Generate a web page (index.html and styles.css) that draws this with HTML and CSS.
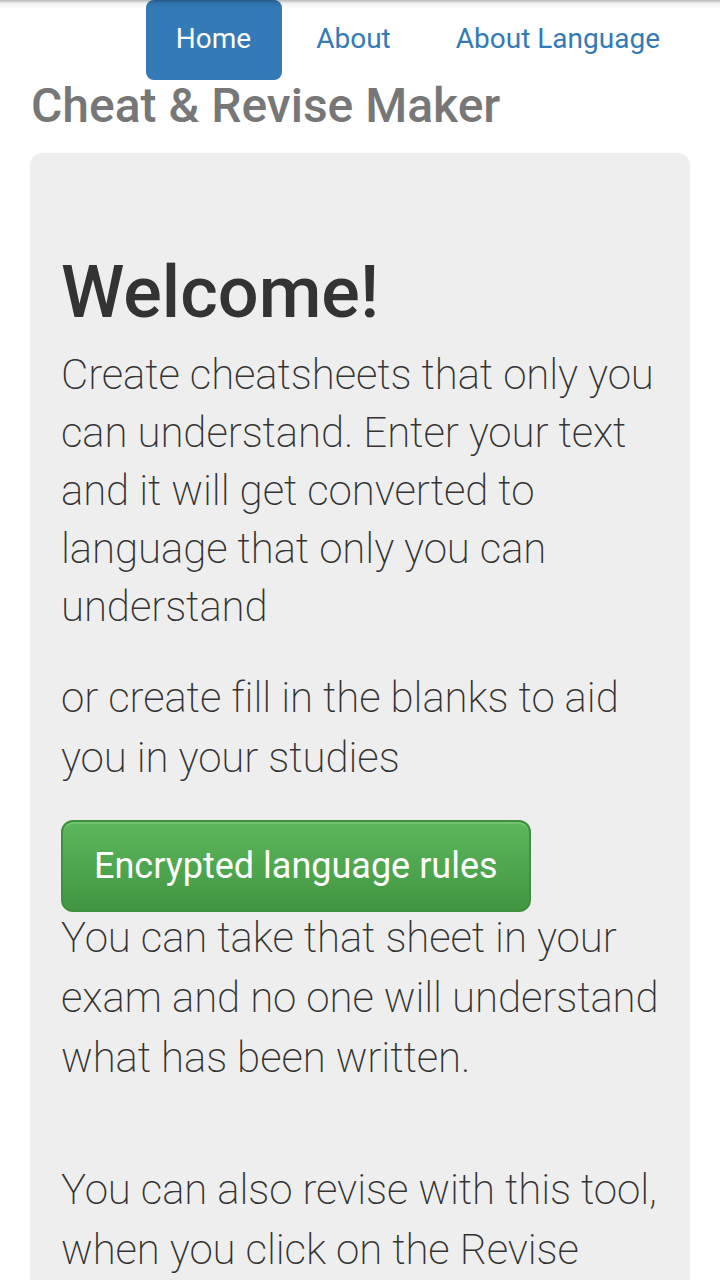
FILE: index.html
```html
<!DOCTYPE html>
<html lang="en">
<head>
<meta charset="utf-8">
<title>Cheat &amp; Revise Maker</title>
<link rel="stylesheet" href="styles.css">
</head>
<body>
<div class="topshade"></div>
<nav class="nav">
  <a class="nav-link active" href="#">Home</a>
  <a class="nav-link" href="#">About</a>
  <a class="nav-link" href="#">About Language</a>
</nav>
<h3 class="site-title">Cheat &amp; Revise Maker</h3>
<div class="jumbotron">
  <h1 class="welcome">Welcome!</h1>
  <p class="lead first">Create cheatsheets that only you can understand. Enter your text and it will get converted to language that only you can understand</p>
  <p class="lead">or create fill in the blanks to aid you in your studies</p>
  <a class="btn-success" href="#">Encrypted language rules</a>
  <p class="lead after-btn">You can take that sheet in your exam and no one will understand what has been written.</p>
  <p class="lead last">You can also revise with this tool, when you click on the Revise button</p>
</div>
</body>
</html>
```
FILE: styles.css
```css
html, body {
  margin: 0;
  padding: 0;
  background: #fff;
}
body {
  font-family: Roboto, "Noto Sans", sans-serif;
  color: #333;
  overflow: hidden;
  height: 1280px;
}
.topshade {
  position: fixed;
  top: 0;
  left: 0;
  right: 0;
  height: 8px;
  background: linear-gradient(to bottom, rgba(0,0,0,0.28), rgba(0,0,0,0.06) 40%, rgba(0,0,0,0));
  z-index: 10;
}
.nav {
  display: flex;
  justify-content: flex-end;
  gap: 4px;
  padding: 0 29px 0 0;
  height: 80px;
}
.nav-link {
  display: block;
  padding: 0 31px 0 30px;
  height: 80px;
  line-height: 78px;
  font-size: 28px;
  color: #337ab7;
  text-decoration: none;
  border-radius: 8px;
}
.nav-link.active {
  background: #337ab7;
  color: #fff;
}
.site-title {
  margin: 0 0 20px 31px;
  font-size: 48px;
  line-height: 1.1;
  font-weight: 500;
  color: #777;
}
.jumbotron {
  margin: 0 30px;
  background: #eee;
  border-radius: 12px;
  padding: 60px 26px 60px 31px;
  min-height: 1200px;
}
.welcome {
  margin: 40px 0 14px;
  font-size: 72px;
  line-height: 1.1;
  font-weight: 500;
  color: #333;
}
.lead {
  margin: 0 0 30px;
  font-size: 42px;
  line-height: 60px;
  font-weight: 200;
  letter-spacing: -0.1px;
  color: #333;
}
.lead.first {
  line-height: 58px;
  margin-bottom: 32px;
}
.btn-success {
  display: inline-block;
  margin-top: 2px;
  padding: 20px 31px;
  font-size: 36px;
  line-height: 48px;
  letter-spacing: 0;
  color: #fff;
  text-decoration: none;
  border: 2px solid #3e8f3e;
  border-radius: 12px;
  background: linear-gradient(to bottom, #5cb85c 0%, #419641 100%);
  box-shadow: inset 0 2px 0 rgba(255,255,255,0.15);
}
.lead.after-btn {
  margin: -4px 0 0;
}
.lead.last {
  margin-top: 72px;
}
```
